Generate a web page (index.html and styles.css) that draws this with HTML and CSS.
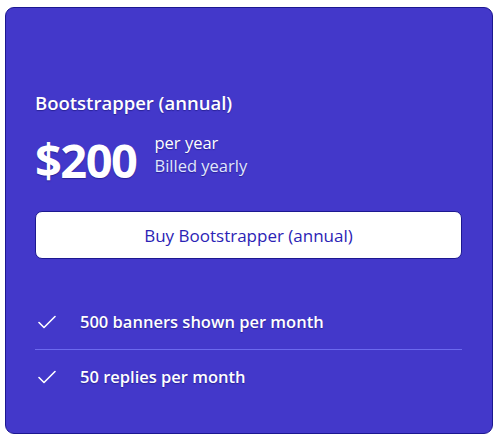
FILE: index.html
```html
<!DOCTYPE html>
<html>
<head>
<meta charset="utf-8">
<link rel="stylesheet" href="styles.css">
</head>
<body>
<div class="card">
  <h3 class="title">Bootstrapper (annual)</h3>
  <div class="price-row">
    <span class="price">$200</span>
    <div class="period">
      <span>per year</span>
      <span>Billed yearly</span>
    </div>
  </div>
  <button class="buy">Buy Bootstrapper (annual)</button>
  <ul class="features">
    <li class="feature">
      <svg class="check" width="18" height="14" viewBox="0 0 18 14"><path d="M1 7.5 L6 12.5 L17 1.5" fill="none" stroke="#ffffff" stroke-width="1.6" stroke-linecap="round" stroke-linejoin="round"/></svg>
      <span>500 banners shown per month</span>
    </li>
    <li class="feature">
      <svg class="check" width="18" height="14" viewBox="0 0 18 14"><path d="M1 7.5 L6 12.5 L17 1.5" fill="none" stroke="#ffffff" stroke-width="1.6" stroke-linecap="round" stroke-linejoin="round"/></svg>
      <span>50 replies per month</span>
    </li>
  </ul>
</div>
</body>
</html>
```
FILE: styles.css
```css
html, body {
  margin: 0;
  padding: 0;
  background: #ffffff;
}
body {
  font-family: "Open Sans", "Noto Sans", sans-serif;
  color: #ffffff;
}
.card {
  box-sizing: border-box;
  margin: 7px 0 0 5px;
  width: 488px;
  height: 427px;
  background: #4338ca;
  border: 1px solid #1c1890;
  border-radius: 9px;
  padding: 82px 30px 30px 29px;
  display: flex;
  flex-direction: column;
  text-shadow: 0 1px 1px rgba(20, 16, 110, 0.55);
}
.title {
  margin: 0;
  font-size: 18.5px;
  font-weight: 600;
  line-height: 26px;
}
.price-row {
  display: flex;
  align-items: flex-start;
  gap: 18px;
  margin-top: 19px;
}
.price {
  font-size: 47px;
  font-weight: 700;
  line-height: 50px;
  letter-spacing: -1.5px;
}
.period {
  display: flex;
  flex-direction: column;
  font-size: 16.5px;
  line-height: 23px;
  margin-top: -4px;
}
.period span:last-child {
  color: #e0e7ff;
}
.buy {
  margin-top: 26px;
  height: 48px;
  width: 100%;
  background: #ffffff;
  border: 1px solid #1c1890;
  border-radius: 7px;
  font-family: inherit;
  font-size: 17px;
  color: #2b23b5;
  padding: 0;
  flex: none;
  text-shadow: none;
}
.features {
  list-style: none;
  margin: 36px 0 0 0;
  padding: 0;
}
.feature {
  display: flex;
  align-items: center;
  gap: 24px;
  padding: 16px 0 16px 3px;
  line-height: 22px;
  font-size: 16.5px;
  font-weight: 600;
}
.feature + .feature {
  border-top: 1px solid #6c69ee;
}
.check {
  flex: none;
}
```
